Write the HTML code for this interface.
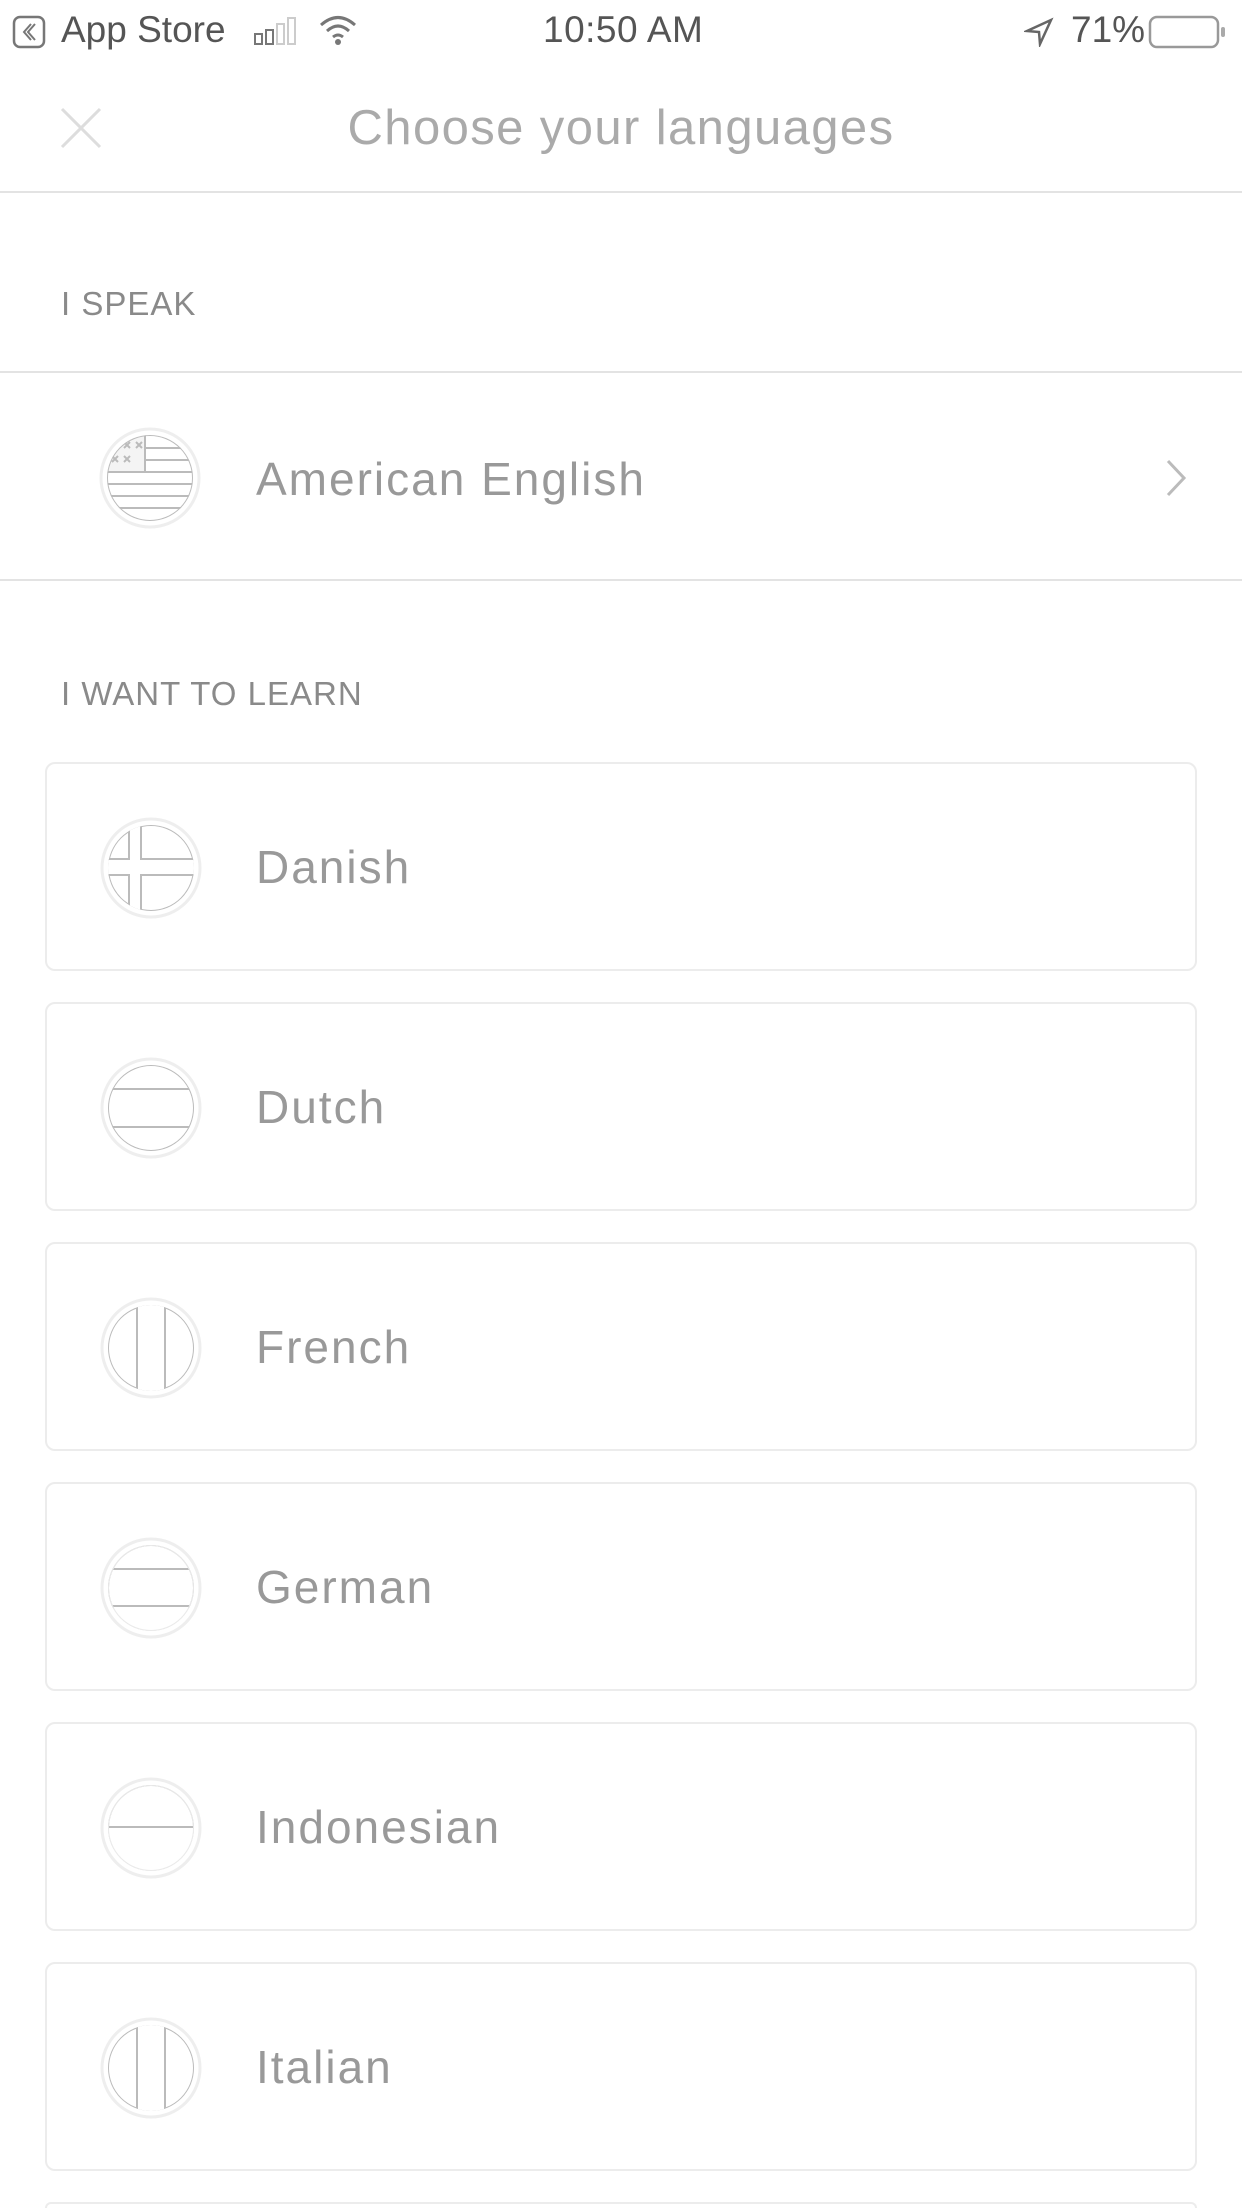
<!DOCTYPE html>
<html><head><meta charset="utf-8">
<style>
*{margin:0;padding:0;box-sizing:border-box}
html,body{width:1242px;height:2208px;overflow:hidden;background:#fff;font-family:"Liberation Sans",sans-serif}
#wrap{position:relative;width:1242px;height:2208px;overflow:hidden}
.abs{position:absolute}
.sb{font-size:37px;color:#555;top:9px}
.title{top:100px;left:0;width:1242px;text-align:center;font-size:49px;letter-spacing:1.4px;color:#aaa}
.hr{position:absolute;left:0;width:1242px;height:2px;background:#e3e3e3}
.lbl{font-size:33px;color:#8a8a8a;letter-spacing:1px;left:61px}
.card{position:absolute;left:45px;width:1152px;height:209px;border:2px solid #ececec;border-radius:10px}
.card svg{position:absolute;left:52px;top:52px}
.card span{position:absolute;left:209px;top:76px;font-size:46px;letter-spacing:2px;color:#999}
</style></head><body><div id="wrap">
<svg width="0" height="0" style="position:absolute"><defs><clipPath id="c"><circle cx="52" cy="52" r="43"/></clipPath></defs></svg>
<svg class="abs" style="left:12px;top:15px" width="34" height="34" viewBox="0 0 34 34"><rect x="2" y="2" width="30" height="30" rx="6" fill="none" stroke="#777" stroke-width="2.5"/><path d="M19 9 L12 17 L19 25 M23 9 L16 17 L23 25" fill="none" stroke="#777" stroke-width="2"/></svg>
<div class="abs sb" style="left:61px">App Store</div>
<svg class="abs" style="left:253px;top:16px" width="48" height="30"><rect x="2" y="18" width="7" height="10" fill="none" stroke="#777" stroke-width="2"/><rect x="13" y="14" width="7" height="14" fill="none" stroke="#777" stroke-width="2"/><rect x="24" y="8" width="7" height="20" fill="none" stroke="#ccc" stroke-width="2"/><rect x="35" y="2" width="7" height="26" fill="none" stroke="#ccc" stroke-width="2"/></svg>
<svg class="abs" style="left:318px;top:14px" width="40" height="32" viewBox="0 0 40 32"><path d="M3 11 Q20 -4 37 11 M9 17 Q20 7 31 17 M15 23 Q20 19 25 23" fill="none" stroke="#777" stroke-width="3"/><circle cx="20" cy="28" r="3" fill="#777"/></svg>
<div class="abs sb" style="left:543px;letter-spacing:0.5px">10:50 AM</div>
<svg class="abs" style="left:1024px;top:17px" width="30" height="30" viewBox="0 0 30 30"><path d="M27 3 L3 14 L15 15 L16 27 Z" fill="none" stroke="#666" stroke-width="2.5"/></svg>
<div class="abs sb" style="left:1071px">71%</div>
<svg class="abs" style="left:1148px;top:14px" width="80" height="36"><rect x="2" y="3" width="68" height="30" rx="7" fill="none" stroke="#999" stroke-width="2.5"/><rect x="73" y="13" width="4" height="10" rx="2" fill="#aaa"/></svg>
<svg class="abs" style="left:57px;top:104px" width="48" height="48"><path d="M5 5 L43 43 M43 5 L5 43" stroke="#ddd" stroke-width="3"/></svg>
<div class="abs title">Choose your languages</div>
<div class="hr" style="top:191px"></div>
<div class="abs lbl" style="top:285px">I SPEAK</div>
<div class="hr" style="top:371px"></div>
<svg class="abs" style="left:98px;top:426px" width="104" height="104" viewBox="0 0 104 104"><circle cx="52" cy="52" r="49" fill="none" stroke="#eee" stroke-width="3"/><g clip-path="url(#c)" stroke="#bbb" stroke-width="2" fill="none"><path d="M0 22 H104 M0 34 H104 M0 46 H104 M0 58 H104 M0 70 H104 M0 82 H104"/><rect x="5" y="5" width="42" height="41" fill="#f4f4f4"/><path d="M14 16 l6 6 m0-6 l-6 6 M26 16 l6 6 m0-6 l-6 6 M38 16 l6 6 m0-6 l-6 6 M14 30 l6 6 m0-6 l-6 6 M26 30 l6 6 m0-6 l-6 6"/><circle cx="52" cy="52" r="43"/></g></svg>
<div class="abs" style="left:256px;top:452px;font-size:46px;letter-spacing:2px;color:#999">American English</div>
<svg class="abs" style="left:1163px;top:458px" width="28" height="40"><path d="M5 3 L21 20 L5 37" fill="none" stroke="#bbb" stroke-width="3"/></svg>
<div class="hr" style="top:579px"></div>
<div class="abs lbl" style="top:675px">I WANT TO LEARN</div>

<div class="card" style="top:762px"><svg width="104" height="104" viewBox="0 0 104 104"><circle cx="52" cy="52" r="49" fill="none" stroke="#eee" stroke-width="3"/><g clip-path="url(#c)" fill="none" stroke="#bbb" stroke-width="2"><circle cx="52" cy="52" r="43"/><path d="M30 0 V104 M42 0 V104 M0 43 H104 M0 59 H104" /><rect x="31" y="0" width="10" height="104" fill="#fff" stroke="none"/><rect x="0" y="44" width="104" height="14" fill="#fff" stroke="none"/></g></svg><span>Danish</span></div>
<div class="card" style="top:1002px"><svg width="104" height="104" viewBox="0 0 104 104"><circle cx="52" cy="52" r="49" fill="none" stroke="#eee" stroke-width="3"/><g clip-path="url(#c)" fill="none" stroke="#bbb" stroke-width="2"><circle cx="52" cy="52" r="43"/><path d="M0 33 H104 M0 71 H104"/></g></svg><span>Dutch</span></div>
<div class="card" style="top:1242px"><svg width="104" height="104" viewBox="0 0 104 104"><circle cx="52" cy="52" r="49" fill="none" stroke="#eee" stroke-width="3"/><g clip-path="url(#c)" fill="none" stroke="#bbb" stroke-width="2"><circle cx="52" cy="52" r="43"/><path d="M38 0 V104 M66 0 V104"/><rect x="39" y="0" width="26" height="104" fill="#fff" stroke="none"/></g></svg><span>French</span></div>
<div class="card" style="top:1482px"><svg width="104" height="104" viewBox="0 0 104 104"><circle cx="52" cy="52" r="49" fill="none" stroke="#eee" stroke-width="3"/><g clip-path="url(#c)" fill="none" stroke="#bbb" stroke-width="2"><circle cx="52" cy="52" r="43"/><path d="M0 33 H104 M0 70 H104"/><rect x="0" y="72" width="104" height="40" fill="#fff" stroke="none"/><circle cx="52" cy="52" r="43" stroke="#eaeaea"/></g></svg><span>German</span></div>
<div class="card" style="top:1722px"><svg width="104" height="104" viewBox="0 0 104 104"><circle cx="52" cy="52" r="49" fill="none" stroke="#eee" stroke-width="3"/><g clip-path="url(#c)" fill="none" stroke="#bbb" stroke-width="2"><circle cx="52" cy="52" r="43"/><path d="M0 51 H104"/><rect x="0" y="53" width="104" height="60" fill="#fff" stroke="none"/><circle cx="52" cy="52" r="43" stroke="#eaeaea"/></g></svg><span>Indonesian</span></div>
<div class="card" style="top:1962px"><svg width="104" height="104" viewBox="0 0 104 104"><circle cx="52" cy="52" r="49" fill="none" stroke="#eee" stroke-width="3"/><g clip-path="url(#c)" fill="none" stroke="#bbb" stroke-width="2"><circle cx="52" cy="52" r="43"/><path d="M38 0 V104 M66 0 V104"/><rect x="39" y="0" width="26" height="104" fill="#fff" stroke="none"/></g></svg><span>Italian</span></div>
<div class="card" style="top:2202px;height:6px;border-bottom:none;border-radius:10px 10px 0 0"></div>
</div></body></html>
